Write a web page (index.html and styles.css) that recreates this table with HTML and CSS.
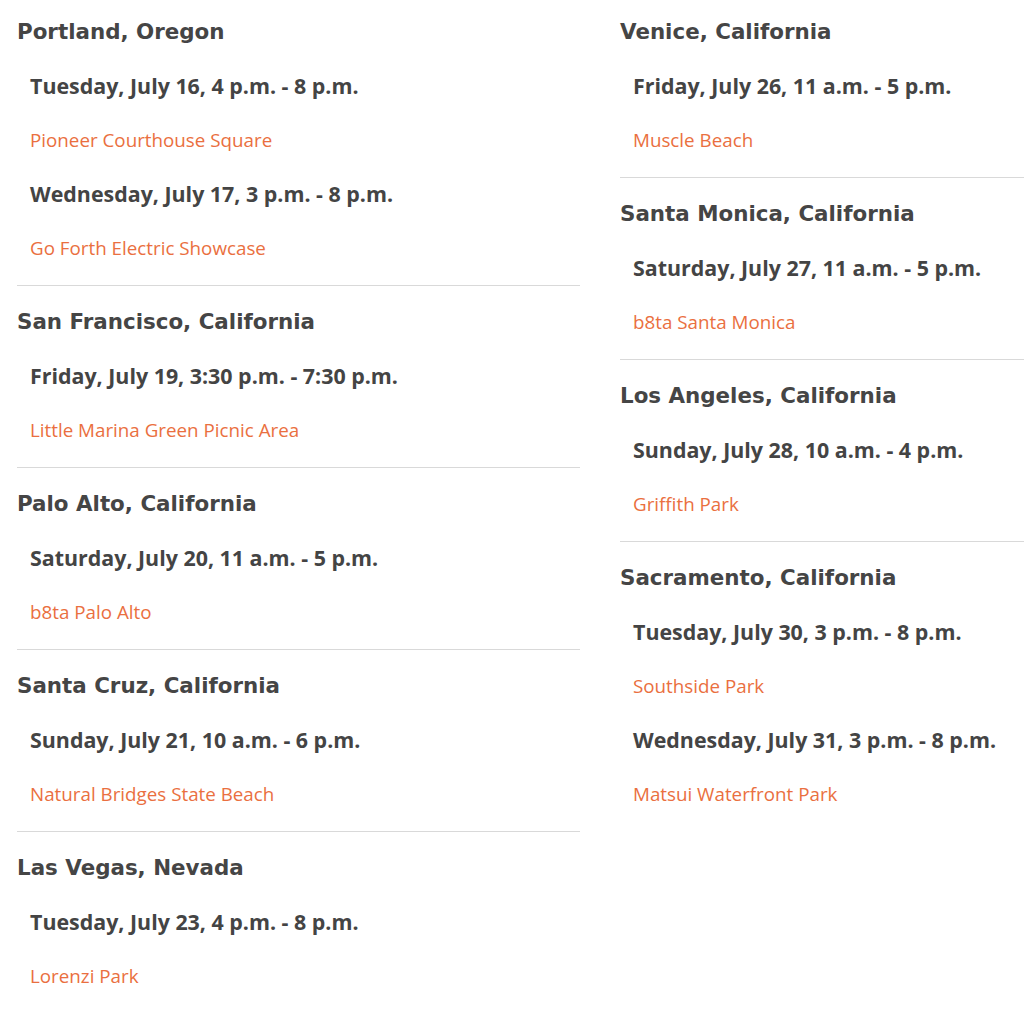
FILE: index.html
```html
<!DOCTYPE html>
<html>
<head>
<meta charset="utf-8">
<link rel="stylesheet" href="styles.css">
</head>
<body>
<div class="page">
  <div class="col">
    <section class="city">
      <h2 class="city-name">Portland, Oregon</h2>
      <p class="when">Tuesday, July 16, 4 p.m. - 8 p.m.</p>
      <p class="where">Pioneer Courthouse Square</p>
      <p class="when">Wednesday, July 17, 3 p.m. - 8 p.m.</p>
      <p class="where">Go Forth Electric Showcase</p>
    </section>
    <section class="city">
      <h2 class="city-name">San Francisco, California</h2>
      <p class="when">Friday, July 19, 3:30 p.m. - 7:30 p.m.</p>
      <p class="where">Little Marina Green Picnic Area</p>
    </section>
    <section class="city">
      <h2 class="city-name">Palo Alto, California</h2>
      <p class="when">Saturday, July 20, 11 a.m. - 5 p.m.</p>
      <p class="where">b8ta Palo Alto</p>
    </section>
    <section class="city">
      <h2 class="city-name">Santa Cruz, California</h2>
      <p class="when">Sunday, July 21, 10 a.m. - 6 p.m.</p>
      <p class="where">Natural Bridges State Beach</p>
    </section>
    <section class="city last">
      <h2 class="city-name">Las Vegas, Nevada</h2>
      <p class="when">Tuesday, July 23, 4 p.m. - 8 p.m.</p>
      <p class="where">Lorenzi Park</p>
    </section>
  </div>
  <div class="col">
    <section class="city">
      <h2 class="city-name">Venice, California</h2>
      <p class="when">Friday, July 26, 11 a.m. - 5 p.m.</p>
      <p class="where">Muscle Beach</p>
    </section>
    <section class="city">
      <h2 class="city-name">Santa Monica, California</h2>
      <p class="when">Saturday, July 27, 11 a.m. - 5 p.m.</p>
      <p class="where">b8ta Santa Monica</p>
    </section>
    <section class="city">
      <h2 class="city-name">Los Angeles, California</h2>
      <p class="when">Sunday, July 28, 10 a.m. - 4 p.m.</p>
      <p class="where">Griffith Park</p>
    </section>
    <section class="city last">
      <h2 class="city-name">Sacramento, California</h2>
      <p class="when">Tuesday, July 30, 3 p.m. - 8 p.m.</p>
      <p class="where">Southside Park</p>
      <p class="when">Wednesday, July 31, 3 p.m. - 8 p.m.</p>
      <p class="where">Matsui Waterfront Park</p>
    </section>
  </div>
</div>
</body>
</html>
```

FILE: styles.css
```css
html, body {
  margin: 0;
  padding: 0;
  background: #ffffff;
  overflow: hidden;
}
.page {
  display: grid;
  grid-template-columns: 563px 563px;
  column-gap: 40px;
  align-items: start;
  padding: 5px 0 0 17px;
  width: 1300px;
}
.col {
  display: flex;
  flex-direction: column;
}
.city {
  border-bottom: 1px solid #d9d9d9;
  padding-bottom: 10px;
  margin-bottom: 9px;
}
.city.last {
  border-bottom: none;
}
.city-name {
  margin: 0;
  font-family: "DejaVu Sans", sans-serif;
  font-weight: 700;
  font-size: 21.4px;
  line-height: 54px;
  color: #454545;
}
.when {
  margin: 0;
  padding-left: 13px;
  font-family: "Open Sans", sans-serif;
  font-weight: 700;
  font-size: 21.4px;
  line-height: 54px;
  color: #444444;
}
.where {
  margin: 0;
  padding-left: 13px;
  font-family: "Open Sans", sans-serif;
  font-weight: 400;
  font-size: 18.8px;
  line-height: 54px;
  color: #ea6f40;
}
```
